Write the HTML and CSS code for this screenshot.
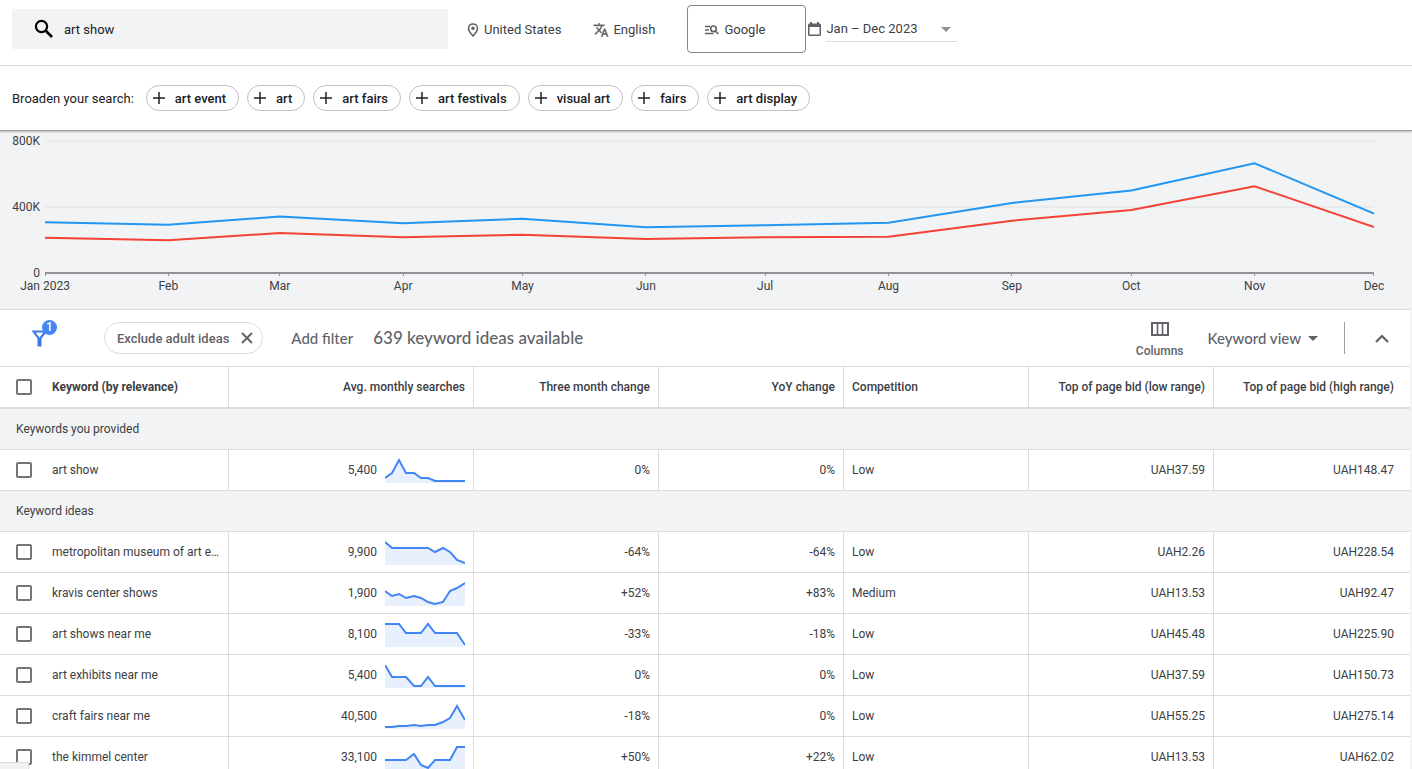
FILE: index.html
```
<!DOCTYPE html>
<html lang="en">
<head>
<meta charset="utf-8">
<meta name="viewport" content="width=device-width, initial-scale=1">
<title>Keyword ideas</title>
<link rel="stylesheet" href="styles.css">
</head>
<body>
<div class="app">
  <header class="topbar">
    <label class="search">
      <svg class="search-icon" width="20" height="20" viewBox="0 0 20 20" aria-hidden="true"><circle cx="7.500" cy="7.500" r="5.600" fill="none" stroke="#000" stroke-width="2.200"/><path d="M11.500 11.500l6.500 6.500" stroke="#000" stroke-width="2.600"/></svg>
      <input class="search-input" type="text" value="art show" aria-label="Search keywords">
    </label>
    <button class="setting setting-location" type="button">
      <svg width="12" height="14" viewBox="0 0 12 14" aria-hidden="true"><path d="M6 1C3.300 1 1.500 2.900 1.500 5.300 1.500 8.300 6 13 6 13s4.500-4.700 4.500-7.700C10.500 2.900 8.700 1 6 1z" fill="none" stroke="#5f6368" stroke-width="1.600"/><circle cx="6" cy="5.300" r="1.700" fill="#5f6368"/></svg>
      <span>United States</span>
    </button>
    <button class="setting setting-language" type="button">
      <svg width="16" height="16" viewBox="0 0 24 24" aria-hidden="true"><path fill="#5f6368" stroke="#5f6368" stroke-width=".5" d="M12.870 15.070l-2.540-2.510.030-.030A17.520 17.520 0 0 0 14.070 6H17V4h-7V2H8v2H1v2h11.170C11.500 7.920 10.440 9.750 9 11.350 8.070 10.320 7.300 9.190 6.690 8h-2c.730 1.630 1.730 3.170 2.980 4.560l-5.090 5.020L4 19l5-5 3.110 3.110.760-2.040zM18.500 10h-2L12 22h2l1.120-3h4.750L21 22h2l-4.500-12zm-2.620 7l1.620-4.330L19.120 17h-3.240z"/></svg>
      <span>English</span>
    </button>
    <button class="setting setting-network" type="button">
      <svg width="15" height="12" viewBox="0 0 15 12" fill="none" stroke="#5f6368" stroke-width="1.600" aria-hidden="true"><path d="M1 2.500h5M1 6h4M1 9.500h8.500M11.300 7l3 3"/><circle cx="9.500" cy="4.800" r="2.800"/></svg>
      <span>Google</span>
    </button>
    <div class="daterange">
      <svg width="13" height="14" viewBox="0 0 13 14" aria-hidden="true"><path fill="#5f6368" fill-rule="evenodd" d="M2 0h2v1.500h5V0h2v1.500h.5c.800 0 1.500.600 1.500 1.500v9.500c0 .800-.600 1.500-1.500 1.500h-10C.600 14 0 13.300 0 12.500V3c0-.900.600-1.500 1.500-1.500H2zM1.500 5v7.500h10V5z"/></svg>
      <button class="date-button" type="button"><span>Jan – Dec 2023</span><svg width="10" height="5" viewBox="0 0 10 5" aria-hidden="true"><path d="M0 0h10L5 5z" fill="#8d8f91"/></svg></button>
    </div>
  </header>

  <section class="broaden">
    <span class="broaden-label">Broaden your search:</span>
    <button class="chip" type="button"><svg width="12" height="12" viewBox="0 0 12 12" aria-hidden="true"><path d="M0 6h12M6 0v12"/></svg><span>art event</span></button>
    <button class="chip" type="button"><svg width="12" height="12" viewBox="0 0 12 12" aria-hidden="true"><path d="M0 6h12M6 0v12"/></svg><span>art</span></button>
    <button class="chip" type="button"><svg width="12" height="12" viewBox="0 0 12 12" aria-hidden="true"><path d="M0 6h12M6 0v12"/></svg><span>art fairs</span></button>
    <button class="chip" type="button"><svg width="12" height="12" viewBox="0 0 12 12" aria-hidden="true"><path d="M0 6h12M6 0v12"/></svg><span>art festivals</span></button>
    <button class="chip" type="button"><svg width="12" height="12" viewBox="0 0 12 12" aria-hidden="true"><path d="M0 6h12M6 0v12"/></svg><span>visual art</span></button>
    <button class="chip" type="button"><svg width="12" height="12" viewBox="0 0 12 12" aria-hidden="true"><path d="M0 6h12M6 0v12"/></svg><span>fairs</span></button>
    <button class="chip" type="button"><svg width="12" height="12" viewBox="0 0 12 12" aria-hidden="true"><path d="M0 6h12M6 0v12"/></svg><span>art display</span></button>
  </section>

  <section class="chart">
    <svg class="plot" role="img" aria-label="Monthly search volume">
      <svg width="100%" height="178" viewBox="0 0 1329 178" preserveAspectRatio="none">
        <path class="grid" d="M0 10H1329M0 76H1329"/>
        <path class="axis" d="M0 142H1329"/>
        <path class="tick" d="M.5 142v3M123.500 142v3M234.500 142v3M358.500 142v3M477.500 142v3M600.500 142v3M720.500 142v3M843.500 142v3M966.500 142v3M1086.500 142v3M1209.500 142v3M1328.500 142v3"/>
        <polyline class="series total" points="0,91.300 123.300,93.800 234.800,85.500 358,92.300 477.500,87.800 600.800,96.300 720.200,94.300 843.500,91.800 966.900,72 1086.300,59.500 1209.600,32.300 1329,82.500"/>
        <polyline class="series mobile" points="0,106.700 123.300,109.300 234.800,102 358,106.300 477.500,103.700 600.800,108 720.200,106.200 843.500,105.700 966.900,89.700 1086.300,79 1209.600,55.300 1329,96"/>
      </svg>
      <g class="y-labels">
        <text x="-5" y="14">800K</text>
        <text x="-5" y="80">400K</text>
        <text x="-5" y="146">0</text>
      </g>
      <g class="x-labels">
        <text x="0" y="159">Jan 2023</text>
        <text x="9.280%" y="159">Feb</text>
        <text x="17.660%" y="159">Mar</text>
        <text x="26.950%" y="159">Apr</text>
        <text x="35.930%" y="159">May</text>
        <text x="45.210%" y="159">Jun</text>
        <text x="54.190%" y="159">Jul</text>
        <text x="63.470%" y="159">Aug</text>
        <text x="72.750%" y="159">Sep</text>
        <text x="81.740%" y="159">Oct</text>
        <text x="91.020%" y="159">Nov</text>
        <text x="100%" y="159">Dec</text>
      </g>
    </svg>
  </section>

  <main class="card">
    <div class="toolbar">
      <button class="filter" type="button" aria-label="Filters, 1 applied">
        <svg width="19" height="18" viewBox="0 0 19 18" aria-hidden="true"><path d="M1 1.500h14.500v1.800L10.500 9.500V17.500h-4V9.500L.500 1.500zM4.500 3.500l4 5 4-5z" fill="#3b78e7" fill-rule="evenodd"/></svg>
        <span class="badge">1</span>
      </button>
      <button class="filter-chip" type="button"><span>Exclude adult ideas</span><svg width="12" height="12" viewBox="0 0 12 12" aria-hidden="true"><path d="M1 1l10 10M11 1L1 11" stroke="#5f6368" stroke-width="1.900"/></svg></button>
      <button class="add-filter" type="button">Add filter</button>
      <h1 class="count">639 keyword ideas available</h1>
      <button class="columns" type="button">
        <svg width="18" height="14" viewBox="0 0 18 14" fill="none" stroke="#5f6368" aria-hidden="true"><path d="M1 1h16v12H1z" stroke-width="2"/><path d="M6.500 1v12M11.500 1v12" stroke-width="1.600"/></svg>
        Columns
      </button>
      <button class="view" type="button">Keyword view<svg width="10" height="5" viewBox="0 0 10 5" aria-hidden="true"><path d="M0 0h10L5 5z" fill="#5f6368"/></svg></button>
      <span class="divider"></span>
      <button class="collapse" type="button" aria-label="Collapse"><svg width="14" height="9" viewBox="0 0 14 9" aria-hidden="true"><path d="M1 8l6-6 6 6" fill="none" stroke="#5f6368" stroke-width="2.200"/></svg></button>
    </div>

    <table class="ideas">
      <colgroup><col class="col-check"><col class="col-base"><col class="col-searches"><col class="col-base"><col class="col-base"><col class="col-base"><col class="col-base"><col></colgroup>
      <thead>
        <tr>
          <th class="check"><input type="checkbox" aria-label="Select all"></th>
          <th class="text">Keyword (by relevance)</th>
          <th>Avg. monthly searches</th>
          <th>Three month change</th>
          <th>YoY change</th>
          <th class="text">Competition</th>
          <th>Top of page bid (low range)</th>
          <th>Top of page bid (high range)</th>
        </tr>
      </thead>
      <tbody>
        <tr class="group"><td colspan="8">Keywords you provided</td></tr>
        <tr>
          <td class="check"><input type="checkbox" aria-label="art show"></td><td class="text">art show</td>
          <td><div class="volume">5,400<svg class="spark" width="80" height="26" viewBox="0 0 80 26"><path d="M0 21L7 16 14 2 21 16 29 16 36 21 43 21 50 24 80 24V26H0z"/><polyline points="0,21 7,16 14,3 21,16 29,16 36,21 43,21 50,24 80,24"/></svg></div></td>
          <td>0%</td><td>0%</td><td class="text">Low</td><td>UAH37.59</td><td>UAH148.47</td>
        </tr>
        <tr class="group"><td colspan="8">Keyword ideas</td></tr>
        <tr>
          <td class="check"><input type="checkbox" aria-label="metropolitan museum of art exhibits"></td><td class="text">metropolitan museum of art exhibits</td>
          <td><div class="volume">9,900<svg class="spark" width="80" height="26" viewBox="0 0 80 26"><path d="M0 3L7 9 43 9 50 13 58 9 65 13 72 21 80 24V26H0z"/><polyline points="0,3 7,9 43,9 50,13 58,9 65,13 72,21 80,24"/></svg></div></td>
          <td>-64%</td><td>-64%</td><td class="text">Low</td><td>UAH2.26</td><td>UAH228.54</td>
        </tr>
        <tr>
          <td class="check"><input type="checkbox" aria-label="kravis center shows"></td><td class="text">kravis center shows</td>
          <td><div class="volume">1,900<svg class="spark" width="80" height="26" viewBox="0 0 80 26"><path d="M0 11L7 16 14 14 21 18 29 16 36 18 43 22 50 24 58 22 65 11 72 8 80 3V26H0z"/><polyline points="0,11 7,16 14,14 21,18 29,16 36,18 43,22 50,24 58,22 65,11 72,8 80,3"/></svg></div></td>
          <td>+52%</td><td>+83%</td><td class="text">Medium</td><td>UAH13.53</td><td>UAH92.47</td>
        </tr>
        <tr>
          <td class="check"><input type="checkbox" aria-label="art shows near me"></td><td class="text">art shows near me</td>
          <td><div class="volume">8,100<svg class="spark" width="80" height="26" viewBox="0 0 80 26"><path d="M0 3L14 3 21 12 36 12 43 3 50 12 72 12 80 24V26H0z"/><polyline points="0,3 14,3 21,12 36,12 43,3 50,12 72,12 80,24"/></svg></div></td>
          <td>-33%</td><td>-18%</td><td class="text">Low</td><td>UAH45.48</td><td>UAH225.90</td>
        </tr>
        <tr>
          <td class="check"><input type="checkbox" aria-label="art exhibits near me"></td><td class="text">art exhibits near me</td>
          <td><div class="volume">5,400<svg class="spark" width="80" height="26" viewBox="0 0 80 26"><path d="M0 3L7 15 21 15 29 24 36 24 43 15 50 24 80 24V26H0z"/><polyline points="0,3 7,15 21,15 29,24 36,24 43,15 50,24 80,24"/></svg></div></td>
          <td>0%</td><td>0%</td><td class="text">Low</td><td>UAH37.59</td><td>UAH150.73</td>
        </tr>
        <tr>
          <td class="check"><input type="checkbox" aria-label="craft fairs near me"></td><td class="text">craft fairs near me</td>
          <td><div class="volume">40,500<svg class="spark" width="80" height="26" viewBox="0 0 80 26"><path d="M0 24L7 24 14 23 21 23 29 22 36 23 43 22 50 22 58 19 65 15 72 3 80 17V26H0z"/><polyline points="0,24 7,24 14,23 21,23 29,22 36,23 43,22 50,22 58,19 65,15 72,3 80,17"/></svg></div></td>
          <td>-18%</td><td>0%</td><td class="text">Low</td><td>UAH55.25</td><td>UAH275.14</td>
        </tr>
        <tr>
          <td class="check"><input type="checkbox" aria-label="the kimmel center"></td><td class="text">the kimmel center</td>
          <td><div class="volume">33,100<svg class="spark" width="80" height="26" viewBox="0 0 80 26"><path d="M0 16L21 16 29 10 36 21 43 24 50 16 65 16 72 3 80 3V26H0z"/><polyline points="0,16 21,16 29,10 36,21 43,24 50,16 65,16 72,3 80,3"/></svg></div></td>
          <td>+50%</td><td>+22%</td><td class="text">Low</td><td>UAH13.53</td><td>UAH62.02</td>
        </tr>
      </tbody>
    </table>
  </main>
  <div class="status"></div>
</div>
</body>
</html>
```
FILE: styles.css
```
* { box-sizing: border-box; }

body {
  margin: 0;
  background: #f1f3f4;
  color: #3c4043;
  font: 12px/16px Roboto, "Liberation Sans", sans-serif;
}

button, input { font: inherit; color: inherit; }
button { padding: 0; border: 0; background: none; white-space: nowrap; }
svg { flex: none; }

.app { position: relative; height: 100vh; overflow: hidden; }

.topbar {
  display: flex;
  align-items: center;
  height: 66px;
  padding: 0 12px 8px;
  background: #fff;
  border-bottom: 1px solid #dadce0;
  font-size: 13px;
}
.search {
  display: flex;
  align-items: center;
  flex: 0 1 436px;
  height: 40px;
  padding-left: 22px;
  gap: 10px;
  background: #f1f3f4;
  color: #202124;
}
.search-input { flex: 1; min-width: 0; padding: 2px 0 0; border: 0; outline: 0; background: none; }

.setting { display: flex; align-items: center; height: 48px; padding-top: 2px; gap: 5px; }
.setting-location { margin-left: 19px; }
.setting-language { margin-left: 32px; gap: 4px; }
.setting-network {
  width: 119px;
  margin-left: 32px;
  padding-left: 16px;
  border: 1px solid #80868b;
  border-radius: 4px;
}
.daterange { display: flex; align-items: center; gap: 5px; margin-left: 2px; }
.date-button {
  display: flex;
  align-items: center;
  justify-content: space-between;
  width: 131px;
  height: 26px;
  padding: 2px 6px 0 0;
  border-bottom: 1px solid #dadce0;
}

.broaden {
  position: relative;
  display: flex;
  align-items: center;
  gap: 8px;
  height: 65px;
  padding: 0 12px;
  background: #fff;
  border-bottom: 1px solid #9aa0a6;
  box-shadow: 0 1px 2px #00000040;
  color: #202124;
  font-size: 13px;
}
.broaden-label { margin-right: 4px; padding-top: 2px; }
.chip {
  display: flex;
  align-items: center;
  gap: 10px;
  height: 26px;
  padding: 0 12px 0 6px;
  border: 1px solid #bdc1c6;
  border-radius: 13px;
  font-weight: 500;
}
.chip span, .filter-chip span { padding-top: 2px; }
.chip path { stroke: #202124; stroke-width: 1.5; }

.chart { height: 178px; padding: 0 38px 0 45px; }
.plot { display: block; width: 100%; height: 178px; overflow: visible; fill: #3c4043; font: 12px Roboto, sans-serif; }
.y-labels { text-anchor: end; }
.x-labels { text-anchor: middle; }
.grid { stroke: #e8eaec; stroke-width: 2; }
.axis { stroke: #919396; stroke-width: 2; }
.tick { stroke: #919396; stroke-width: 1; }
.series { fill: none; stroke-width: 2; }
.total { stroke: #2196f3; }
.mobile { stroke: #f44336; }

.card { margin-right: 2px; background: #fff; border-top: 1px solid #dadce0; }
.toolbar {
  display: flex;
  align-items: center;
  height: 56px;
  padding: 0 21px 0 31px;
  color: #5f6368;
  font-family: Lato, Roboto, sans-serif;
  font-size: 15px;
  line-height: 20px;
  font-weight: 500;
}
.filter { position: relative; display: flex; }
.badge {
  position: absolute;
  left: 11px;
  top: -9px;
  width: 15px;
  height: 15px;
  border-radius: 8px;
  background: #4285f4;
  color: #fff;
  font: 500 12px/15px Roboto, sans-serif;
}
.filter-chip {
  display: flex;
  align-items: center;
  gap: 12px;
  height: 32px;
  margin-left: 54px;
  padding: 0 9px 0 12px;
  border: 1px solid #dadce0;
  border-radius: 16px;
  font: 500 13px/16px Roboto, sans-serif;
}
.add-filter { margin-left: 28px; }
.count { margin: 0 auto 0 20px; font-size: 17px; font-weight: 500; white-space: nowrap; }
.columns {
  display: flex;
  flex-direction: column;
  align-items: center;
  gap: 7px;
  padding-top: 4px;
  font: 500 12px/16px Roboto, sans-serif;
}
.view { display: flex; align-items: center; gap: 7px; margin-left: 24px; }
.divider { width: 1px; height: 32px; margin: 0 30px 0 26px; background: #9aa0a6; }
.collapse { display: flex; }

.ideas { width: 100%; table-layout: fixed; border-spacing: 0; border-top: 1px solid #dadce0; }
.col-check { width: 44px; }
.col-base { width: 185px; }
.col-searches { width: 245px; }
th, td {
  height: 41px;
  padding: 0 8px;
  border-right: 1px solid #dadce0;
  border-bottom: 1px solid #dadce0;
  text-align: right;
  white-space: nowrap;
}
th { height: 42px; border-bottom-width: 2px; font-weight: 500; }
th.text:nth-child(2) { font-weight: 700; }
.text { text-align: left; overflow: hidden; text-overflow: ellipsis; }
.check { padding: 0 0 0 16px; border-right: 0; text-align: left; }
th:last-child, td:last-child { padding-right: 16px; border-right: 0; }
.group td { padding-left: 16px; background: #f1f3f4; text-align: left; }
input[type="checkbox"] {
  appearance: none;
  display: block;
  width: 16px;
  height: 16px;
  margin: 0;
  border: 2px solid #757575;
  border-radius: 2px;
  background: #fff;
}
.volume { display: flex; align-items: center; justify-content: flex-end; gap: 8px; }
.spark path { fill: #e8f0fe; }
.spark polyline { fill: none; stroke: #4285f4; stroke-width: 2; }

.status {
  position: absolute;
  left: 0;
  bottom: 0;
  width: 29px;
  height: 7px;
  background: #f1f3f4;
  border: 1px solid #dadce0;
  border-width: 1px 1px 0 0;
}
```
